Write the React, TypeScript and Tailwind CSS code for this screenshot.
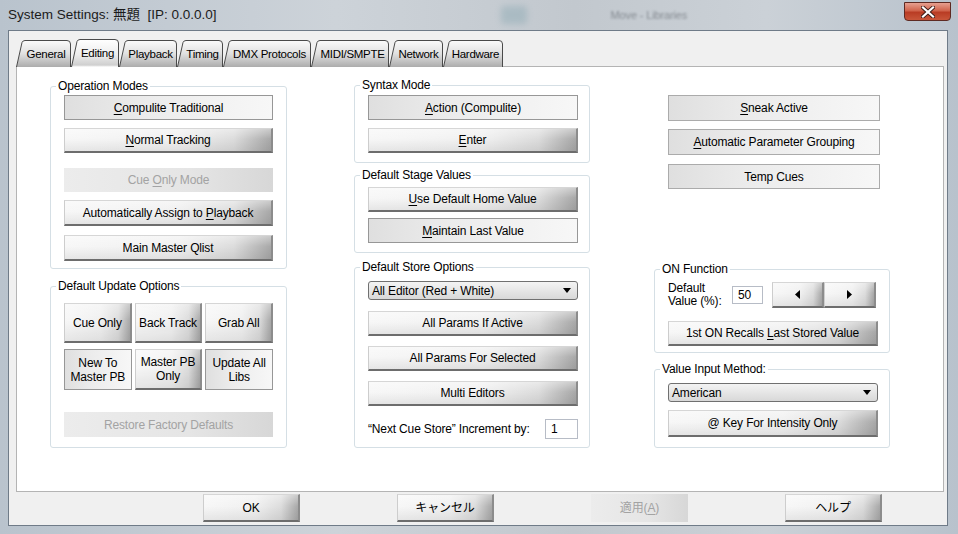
import React from 'react';

type Kind = 'raised' | 'flat' | 'disabled';

const styles: Record<Kind, string> = {
  raised:
    'bg-[linear-gradient(to_bottom,rgba(255,255,255,0.4),rgba(255,255,255,0)_45%,rgba(0,0,0,0.07)),linear-gradient(to_right,#f7f7f7,#f0f0f0_55%,#dcdcdc_82%,#a8a8a8)] border-t border-l border-t-[#d6d6d6] border-l-[#cdcdcd] border-r-2 border-r-[#8c8c8c] border-b-2 border-b-[#6d6d6d] text-black',
  flat: 'bg-[linear-gradient(to_right,#dfdfdf,#ececec_40%,#f7f7f7)] border border-[#979797] text-black',
  disabled: 'bg-[linear-gradient(to_right,#ececec,#e5e5e5_60%,#d7d7d7)] text-[#a3a3a3]',
};

const Btn = ({
  kind = 'raised',
  className = '',
  children,
}: {
  kind?: Kind;
  className?: string;
  children: React.ReactNode;
}) => (
  <div className={`flex items-center justify-center text-center leading-[14px] ${styles[kind]} ${className}`}>
    <span>{children}</span>
  </div>
);

const U = ({ children }: { children: React.ReactNode }) => (
  <span className="underline underline-offset-[2px]">{children}</span>
);

const Group = ({
  title,
  className = '',
  children,
}: {
  title: string;
  className?: string;
  children: React.ReactNode;
}) => (
  <fieldset className={`border border-[#d5dfe5] rounded-[3px] ${className}`}>
    <legend className="ml-[5px] px-[2px] leading-[14px]">{title}</legend>
    {children}
  </fieldset>
);

const Select = ({ value }: { value: string }) => (
  <div className="h-[19px] rounded-[3px] border border-[#707070] bg-[linear-gradient(to_bottom,#f3f3f3,#e6e6e6_50%,#d8d8d8)] flex items-center justify-between pl-[3px] pr-[6px] leading-[14px]">
    <span>{value}</span>
    <svg width="8" height="5" viewBox="0 0 8 5">
      <path d="M0,0 H8 L4,5 Z" fill="#000" />
    </svg>
  </div>
);

const tabs = [
  { label: 'General', w: 55 },
  { label: 'Editing', w: 48, active: true },
  { label: 'Playback', w: 58 },
  { label: 'Timing', w: 46 },
  { label: 'DMX Protocols', w: 88 },
  { label: 'MIDI/SMPTE', w: 78 },
  { label: 'Network', w: 54 },
  { label: 'Hardware', w: 60 },
];

const Tab = ({ label, w, active, i }: { label: string; w: number; active?: boolean; i: number }) => {
  const h = active ? 28 : 27;
  const s = 6;
  const outline = `M0.5,${h} L${s},2.5 Q${s + 0.8},0.5 ${s + 3},0.5 L${w - 4},0.5 Q${w - 0.5},0.5 ${w - 0.5},4 L${w - 0.5},${h}`;
  const id = `tabgrad${i}`;
  return (
    <div
      className={`relative flex items-center justify-center pl-[5px] ${active ? 'z-10 h-[28px]' : 'h-[27px] mt-[1px]'}`}
      style={{ width: w }}
    >
      <svg className="absolute inset-0" width={w} height={h}>
        <defs>
          <linearGradient id={id} x1="0" y1="0" x2="0" y2="1">
            {active ? (
              <>
                <stop offset="0" stopColor="#ffffff" />
                <stop offset="0.55" stopColor="#ededed" />
                <stop offset="0.93" stopColor="#cfcfcf" />
                <stop offset="1" stopColor="#ffffff" />
              </>
            ) : (
              <>
                <stop offset="0" stopColor="#fbfbfb" />
                <stop offset="0.5" stopColor="#e0e0e0" />
                <stop offset="1" stopColor="#acacac" />
              </>
            )}
          </linearGradient>
        </defs>
        <path d={outline + ' Z'} fill={`url(#${id})`} />
        <path d={outline} fill="none" stroke="#4a4a4a" strokeWidth="1" />
      </svg>
      <span className="relative leading-[14px] text-[11.5px] tracking-[-0.3px]">{label}</span>
    </div>
  );
};

const CloseButton = () => (
  <div className="mt-[2px] w-[47px] h-[19px] rounded-b-[4px] border border-[#5e2a22] bg-[linear-gradient(to_bottom,#e6a090,#d0644c_45%,#b93c24_55%,#c8563a)] flex items-center justify-center">
    <svg width="14" height="12" viewBox="0 0 14 12">
      <path d="M2,1.5 L12,10.5 M12,1.5 L2,10.5" stroke="#3b1d18" strokeWidth="4" strokeLinecap="square" />
      <path d="M2,1.5 L12,10.5 M12,1.5 L2,10.5" stroke="#ffffff" strokeWidth="2.2" strokeLinecap="square" />
    </svg>
  </div>
);

export default function App() {
  return (
    <div className="w-[958px] h-[534px] overflow-hidden flex flex-col bg-[linear-gradient(to_right,#b9c3cd,#cdd3d9_35%,#c2c8ce_60%,#cbd1d7_80%,#b8c2cc)] text-[12px] tracking-[-0.15px] text-black [font-family:'Liberation_Sans','Noto_Sans_CJK_JP',sans-serif]">
      {/* title bar, with the blurred glass behind it */}
      <div className="h-[30px] flex items-start pl-[8px] pr-[7px]">
        <div className="mt-[7px] text-[13.5px] leading-[16px] tracking-normal text-[#1b1b1b]">
          System Settings: 無題&nbsp;&nbsp;[IP: 0.0.0.0]
        </div>
        <div className="ml-[284px] mt-[6px] w-[26px] h-[18px] rounded-[3px] bg-[#6f98a4] opacity-30 blur-[3px]" />
        <div className="ml-[84px] mt-[8px] text-[11px] leading-[14px] text-[#5b6168] opacity-60 blur-[1.2px]">
          Move - Libraries
        </div>
        <div className="ml-auto">
          <CloseButton />
        </div>
      </div>

      {/* client area */}
      <div className="flex-1 ml-[8px] mr-[10px] mb-[8px] border border-[#6f7b88] bg-[#f0f0f0] flex flex-col">
        <div className="ml-[7px] mt-[8px] flex items-start h-[27px]">
          {tabs.map((t, i) => (
            <Tab key={t.label} i={i} label={t.label} w={t.w} active={t.active} />
          ))}
        </div>

        <div className="ml-[7px] w-[928px] h-[426px] border border-[#b4b4b4] bg-white flex items-start pl-[33px] pt-[11px]">
          {/* left column */}
          <div className="w-[237px] mt-[1px] flex flex-col">
            <Group title="Operation Modes">
              <div className="px-[13px] pt-[2px] pb-[7px] flex flex-col">
                <Btn kind="flat" className="h-[25px]">
                  <U>C</U>ompulite Traditional
                </Btn>
                <Btn className="h-[25px] mt-[8px]">
                  <U>N</U>ormal Tracking
                </Btn>
                <Btn kind="disabled" className="h-[24px] mt-[15px]">
                  Cue <U>O</U>nly Mode
                </Btn>
                <Btn className="h-[26px] mt-[8px]">
                  Automatically Assign to <U>P</U>layback
                </Btn>
                <Btn className="h-[26px] mt-[9px]">Main Master Qlist</Btn>
              </div>
            </Group>

            <Group title="Default Update Options" className="mt-[10px]">
              <div className="px-[13px] pt-[10px] pb-[10px] flex flex-col">
                <div className="grid grid-cols-3 gap-x-[3px] gap-y-[6px]">
                  <Btn className="h-[40px]">Cue Only</Btn>
                  <Btn className="h-[40px]">Back Track</Btn>
                  <Btn className="h-[40px]">Grab All</Btn>
                  <Btn kind="flat" className="h-[41px]">
                    New To
                    <br />
                    Master PB
                  </Btn>
                  <Btn className="h-[41px]">
                    Master PB
                    <br />
                    Only
                  </Btn>
                  <Btn kind="flat" className="h-[41px]">
                    Update All
                    <br />
                    Libs
                  </Btn>
                </div>
                <Btn kind="disabled" className="h-[25px] mt-[22px]">
                  Restore Factory Defaults
                </Btn>
              </div>
            </Group>
          </div>

          {/* middle column */}
          <div className="w-[236px] ml-[67px] flex flex-col">
            <Group title="Syntax Mode">
              <div className="pl-[13px] pr-[11px] pt-[3px] pb-[9px] flex flex-col">
                <Btn kind="flat" className="h-[25px]">
                  <U>A</U>ction (Compulite)
                </Btn>
                <Btn className="h-[25px] mt-[8px]">
                  <U>E</U>nter
                </Btn>
              </div>
            </Group>

            <Group title="Default Stage Values" className="mt-[5px]">
              <div className="pl-[13px] pr-[11px] pt-[5px] pb-[9px] flex flex-col">
                <Btn className="h-[25px]">
                  <U>U</U>se Default Home Value
                </Btn>
                <Btn kind="flat" className="h-[25px] mt-[6px]">
                  <U>M</U>aintain Last Value
                </Btn>
              </div>
            </Group>

            <Group title="Default Store Options" className="mt-[7px]">
              <div className="pl-[13px] pr-[11px] pt-[7px] pb-[8px] flex flex-col">
                <Select value="All Editor (Red + White)" />
                <Btn className="h-[25px] mt-[11px]">All Params If Active</Btn>
                <Btn className="h-[25px] mt-[10px]">All Params For Selected</Btn>
                <Btn className="h-[25px] mt-[10px]">Multi Editors</Btn>
                <div className="mt-[13px] flex items-center justify-between">
                  <span className="leading-[14px]">&ldquo;Next Cue Store&rdquo; Increment by:</span>
                  <div className="w-[33px] h-[20px] border border-[#b7bcc6] bg-white pl-[5px] flex items-center leading-[14px]">1</div>
                </div>
              </div>
            </Group>
          </div>

          {/* right column */}
          <div className="w-[236px] ml-[64px] flex flex-col">
            <div className="pl-[14px] pr-[10px] mt-[17px] flex flex-col">
              <Btn kind="flat" className="h-[26px] border-[#ababab]">
                <U>S</U>neak Active
              </Btn>
              <Btn kind="flat" className="h-[26px] mt-[8px] border-[#ababab]">
                <U>A</U>utomatic Parameter Grouping
              </Btn>
              <Btn kind="flat" className="h-[25px] mt-[9px] border-[#ababab]">
                Temp Cues
              </Btn>
            </div>

            <Group title="ON Function" className="mt-[73px]">
              <div className="pl-[13px] pr-[11px] pt-[6px] pb-[6px] flex flex-col">
                <div className="flex items-center">
                  <div className="w-[64px] leading-[13px]">
                    Default
                    <br />
                    Value (%):
                  </div>
                  <div className="w-[31px] h-[18px] border border-[#b7bcc6] bg-white pl-[5px] flex items-center leading-[14px]">50</div>
                  <div className="ml-[9px] flex">
                    <Btn className="w-[52px] h-[26px]">
                      <svg width="5" height="9" viewBox="0 0 5 9" className="block">
                        <path d="M5,0 V9 L0,4.5 Z" fill="#000" />
                      </svg>
                    </Btn>
                    <Btn className="w-[52px] h-[26px]">
                      <svg width="5" height="9" viewBox="0 0 5 9" className="block">
                        <path d="M0,0 V9 L5,4.5 Z" fill="#000" />
                      </svg>
                    </Btn>
                  </div>
                </div>
                <Btn className="h-[25px] mt-[13px]">
                  1st ON Recalls <U>L</U>ast Stored Value
                </Btn>
              </div>
            </Group>

            <Group title="Value Input Method:" className="mt-[9px]">
              <div className="pl-[13px] pr-[11px] pt-[7px] pb-[10px] flex flex-col">
                <Select value="American" />
                <Btn className="h-[27px] mt-[8px]">@ Key For Intensity Only</Btn>
              </div>
            </Group>
          </div>
        </div>

        {/* dialog buttons */}
        <div className="mt-[2px] pl-[194px] flex gap-[97px]">
          <Btn className="w-[97px] h-[28px]">OK</Btn>
          <Btn className="w-[97px] h-[28px]">キャンセル</Btn>
          <Btn kind="disabled" className="w-[97px] h-[28px]">
            適用(<U>A</U>)
          </Btn>
          <Btn className="w-[97px] h-[28px]">ヘルプ</Btn>
        </div>
      </div>
    </div>
  );
}
